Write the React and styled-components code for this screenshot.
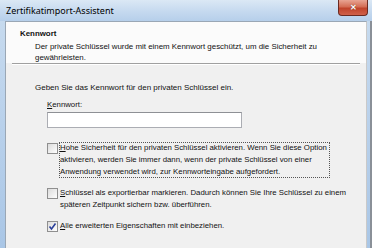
import React from 'react';
import styled, { createGlobalStyle } from 'styled-components';

const GlobalStyle = createGlobalStyle`
   html, body {
      margin: 0;
      padding: 0;
      width: 372px;
      height: 248px;
      overflow: hidden;
      background: #f0f0f0;
   }
   * {
      box-sizing: border-box;
   }
`;

const Window = styled.div`
   width: 372px;
   height: 248px;
   display: flex;
   flex-direction: column;
   background: linear-gradient(180deg, #c9dcef 0%, #bcd3ec 40%, #a9c6e6 100%);
   font-family: "Liberation Sans", Arial, sans-serif;
   color: #111;
`;

const TitleBar = styled.div`
   height: 21px;
   display: flex;
   align-items: center;
   justify-content: space-between;
   padding-left: 6px;
   background: linear-gradient(180deg, #dbe8f5 0%, #c5d9ef 55%, #b6cfea 100%);
`;

const Title = styled.span`
   font-family: "Noto Sans", sans-serif;
   font-size: 9px;
   color: #000;
`;

const CloseButton = styled.div`
   width: 30px;
   height: 16px;
   margin-right: 4px;
   margin-top: -5px;
   border: 1px solid #6b2a21;
   border-top: none;
   border-radius: 0 0 4px 4px;
   background: linear-gradient(180deg, #e8a493 0%, #d46d55 45%, #c0432b 55%, #d0614a 100%);
   display: flex;
   align-items: center;
   justify-content: center;
   color: #fff;
   font-size: 8px;
   font-weight: bold;
   text-shadow: 0 0 1px #5a1a10;
`;

const Frame = styled.div`
   flex: 1;
   display: flex;
   padding: 0 3px 0 5px;
   border-right: 2px solid #8a9098;
`;

const Client = styled.div`
   flex: 1;
   display: flex;
   flex-direction: column;
   background: #f0f0f0;
   border-left: 1px solid #9aa7b5;
   border-top: 1px solid #9aa7b5;
   border-right: 1px solid #c9c9c9;
`;

const Header = styled.div`
   height: 41px;
   padding: 6px 0 0 14px;
   background: #fbfbfb;
   font-size: 7.9px;
`;

const HeaderTitle = styled.div`
   font-weight: bold;
   line-height: 12px;
`;

const HeaderText = styled.div`
   padding-left: 15px;
   padding-top: 1px;
   line-height: 11px;
   white-space: nowrap;
`;

const Separator = styled.div`
   height: 2px;
   margin: 0 6px 0 6px;
   border-top: 1px solid #a0a0a0;
   border-bottom: 1px solid #ffffff;
`;

const Body = styled.div`
   flex: 1;
   padding: 17px 0 0 29px;
   font-size: 7.8px;
   line-height: 12px;
   white-space: nowrap;
`;

const Intro = styled.div`
   margin-bottom: 5px;
   font-size: 8px;
`;

const Field = styled.div`
   padding-left: 12px;
`;

const Label = styled.div`
   margin-bottom: 1px;
`;

const Key = styled.span`
   text-decoration: underline;
`;

const Input = styled.div`
   width: 195px;
   height: 16px;
   background: #fff;
   border: 1px solid #abadb3;
   border-top-color: #8e9095;
`;

const Option = styled.div`
   display: flex;
   align-items: flex-start;
   margin-top: ${props => props.gap}px;
`;

const Box = styled.div`
   width: 11px;
   height: 11px;
   flex: none;
   margin-top: 1px;
   margin-right: 1px;
   border: 1px solid #8f8f8f;
   background: linear-gradient(135deg, #dcdcdc 0%, #f4f4f4 70%, #fff 100%);
   display: flex;
   align-items: center;
   justify-content: center;
`;

const OptionText = styled.div`
   width: ${props => props.width}px;
   padding: 0 2px 0 1px;
   outline: ${props => props.focused ? '1px dotted #555' : 'none'};
   outline-offset: -1px;
`;

const Check = () => (
   <svg width="9" height="9" viewBox="0 0 9 9">
      <path d="M1.5 4.5 L3.5 7 L7.5 1.5" fill="none" stroke="#2a3f9a" strokeWidth="1.6" />
   </svg>
);

export default function App() {
   return (
      <>
         <GlobalStyle />
         <Window>
            <TitleBar>
               <Title>Zertifikatimport-Assistent</Title>
               <CloseButton>✕</CloseButton>
            </TitleBar>
            <Frame>
               <Client>
                  <Header>
                     <HeaderTitle>Kennwort</HeaderTitle>
                     <HeaderText>
                        Der private Schlüssel wurde mit einem Kennwort geschützt, um die Sicherheit zu
                        <br />
                        gewährleisten.
                     </HeaderText>
                  </Header>
                  <Separator />
                  <Body>
                     <Intro>Geben Sie das Kennwort für den privaten Schlüssel ein.</Intro>
                     <Field>
                        <Label><Key>K</Key>ennwort:</Label>
                        <Input />
                        <Option gap={14}>
                           <Box />
                           <OptionText width={271} focused>
                              <Key>H</Key>ohe Sicherheit für den privaten Schlüssel aktivieren. Wenn Sie diese Option
                              <br />
                              aktivieren, werden Sie immer dann, wenn der private Schlüssel von einer
                              <br />
                              Anwendung verwendet wird, zur Kennworteingabe aufgefordert.
                           </OptionText>
                        </Option>
                        <Option gap={9}>
                           <Box />
                           <OptionText width={271}>
                              <Key>S</Key>chlüssel als exportierbar markieren. Dadurch können Sie Ihre Schlüssel zu einem
                              <br />
                              späteren Zeitpunkt sichern bzw. überführen.
                           </OptionText>
                        </Option>
                        <Option gap={9}>
                           <Box><Check /></Box>
                           <OptionText width={271}>
                              <Key>A</Key>lle erweiterten Eigenschaften mit einbeziehen.
                           </OptionText>
                        </Option>
                     </Field>
                  </Body>
               </Client>
            </Frame>
         </Window>
      </>
   );
}
